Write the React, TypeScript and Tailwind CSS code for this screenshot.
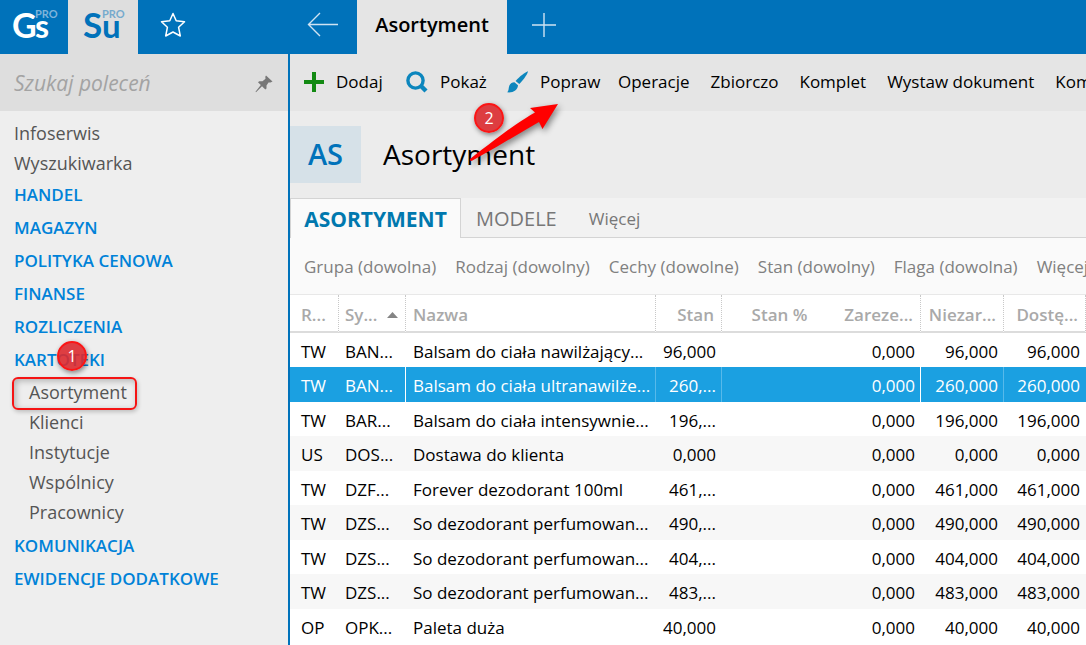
import type { ReactNode } from "react";
import clsx from "clsx";

const mainMenu = ["HANDEL", "MAGAZYN", "POLITYKA CENOWA", "FINANSE", "ROZLICZENIA"];
const lastMenu = ["KOMUNIKACJA", "EWIDENCJE DODATKOWE"];
const kartoteki = ["Asortyment", "Klienci", "Instytucje", "Wspólnicy", "Pracownicy"];
const textActions = ["Operacje", "Zbiorczo", "Komplet", "Wystaw dokument", "Komunikacja"];
const filters = [
    "Grupa (dowolna)",
    "Rodzaj (dowolny)",
    "Cechy (dowolne)",
    "Stan (dowolny)",
    "Flaga (dowolna)",
    "Więcej"
];

const rows = [
    ["TW", "BAN...", "Balsam do ciała nawilżający...", "96,000", "", "0,000", "96,000", "96,000"],
    ["TW", "BAN...", "Balsam do ciała ultranawilże...", "260,...", "", "0,000", "260,000", "260,000"],
    ["TW", "BAR...", "Balsam do ciała intensywnie...", "196,...", "", "0,000", "196,000", "196,000"],
    ["US", "DOS...", "Dostawa do klienta", "0,000", "", "0,000", "0,000", "0,000"],
    ["TW", "DZF...", "Forever dezodorant 100ml", "461,...", "", "0,000", "461,000", "461,000"],
    ["TW", "DZS...", "So dezodorant perfumowan...", "490,...", "", "0,000", "490,000", "490,000"],
    ["TW", "DZS...", "So dezodorant perfumowan...", "404,...", "", "0,000", "404,000", "404,000"],
    ["TW", "DZS...", "So dezodorant perfumowan...", "483,...", "", "0,000", "483,000", "483,000"],
    ["OP", "OPK...", "Paleta duża", "40,000", "", "0,000", "40,000", "40,000"]
];

const selectedRow = 1;

function Badge({ children, className }: { children: ReactNode; className: string }) {
    return (
        <span
            className={clsx(
                "absolute flex size-[30px] items-center justify-center rounded-full border-2 border-[#fb1515] bg-[#dc2a2f]/90 text-base leading-none font-normal text-white shadow-[1px_2px_5px_rgba(0,0,0,0.45)]",
                className
            )}
        >
            {children}
        </span>
    );
}

function GestorLogo() {
    return (
        <svg width="52" height="36" viewBox="0 0 52 36" className="font-['Lato',sans-serif]" aria-hidden="true">
            <text x="4" y="31" fontSize="34" fontWeight="700" fill="#ffffff">G</text>
            <text x="27" y="31" fontSize="32" fontWeight="700" fill="#ffffff">s</text>
            <text x="27" y="11" fontSize="11" fontWeight="700" fill="#7fb4da">PRO</text>
        </svg>
    );
}

function SubiektLogo() {
    return (
        <svg width="52" height="36" viewBox="0 0 52 36" className="font-['Lato',sans-serif]" aria-hidden="true">
            <text x="6" y="31" fontSize="35" fontWeight="700" fill="#0072ba">S</text>
            <text x="25" y="31" fontSize="33" fontWeight="700" fill="#0072ba">u</text>
            <text x="25" y="11" fontSize="11" fontWeight="700" fill="#76aacd">PRO</text>
        </svg>
    );
}

function TopBar() {
    return (
        <header className="flex h-[54px] shrink-0 bg-[#0072ba] text-white">
            <div className="flex w-[290px] shrink-0">
                <button aria-label="Gestor PRO" className="flex w-[68px] items-center justify-center pb-1">
                    <GestorLogo />
                </button>
                <button aria-label="Subiekt PRO" className="flex w-[70px] items-center justify-center bg-[#dedede] pb-1">
                    <SubiektLogo />
                </button>
                <button aria-label="Ulubione" className="flex w-[70px] items-center justify-center pb-1">
                    <svg width="26" height="26" viewBox="0 0 26 26" fill="none" stroke="currentColor" strokeWidth="1.5" strokeLinejoin="round">
                        <path d="M13 1.5 L16.2 8.8 L24.5 9.8 L18.6 15.3 L20.3 24 L13 20 L5.7 24 L7.4 15.3 L1.5 9.8 L9.8 8.8 Z" />
                    </svg>
                </button>
            </div>
            <button aria-label="Wstecz" className="flex w-[67px] shrink-0 items-center justify-center pr-[2px] pb-1">
                <svg width="32" height="26" viewBox="0 0 32 26" fill="none" stroke="#cfe3f2" strokeWidth="1.4">
                    <path d="M31 12.5 H1.5 M13 1 L1.5 12.5 L13 24" />
                </svg>
            </button>
            <button className="w-[150px] shrink-0 bg-[#e5e5e5] pb-1 text-xl font-semibold text-black">Asortyment</button>
            <button aria-label="Nowa karta" className="flex w-[74px] items-center justify-center pb-1">
                <svg width="24" height="24" viewBox="0 0 24 24" fill="none" stroke="#cfe3f2" strokeWidth="1.4">
                    <path d="M0 12 H24 M12 0 V24" />
                </svg>
            </button>
        </header>
    );
}

function MenuGroup({ children }: { children: ReactNode }) {
    return (
        <a href="#menu" className="relative block text-[17px] leading-[33px] font-semibold text-[#0082d8]">
            {children}
        </a>
    );
}

function Sidebar() {
    return (
        <aside className="w-[290px] shrink-0 border-r-2 border-[#0072ba] bg-[#eeeeee]">
            <div className="flex h-[57px] items-center bg-[#dedede] pt-[3px] pr-[15px] pl-[14px]">
                <input
                    type="text"
                    aria-label="Szukaj poleceń"
                    placeholder="Szukaj poleceń"
                    className="min-w-0 flex-1 bg-transparent text-[21px] italic outline-none placeholder:text-[#a3a3a3]"
                />
                <button aria-label="Przypnij">
                    <svg width="18" height="18" viewBox="0 0 18 18" fill="#777777">
                        <path d="M11 0.5 L17.5 6.5 L15.5 7.5 L13.5 7.5 L11.5 10.5 L11.5 13.5 L10.3 14.5 L7 11.3 L1 17.3 L0.5 16.8 L5.8 10 L3 7.3 L4.2 6.3 L7.5 6.3 L10.5 3.8 L10.3 1.8 Z" />
                    </svg>
                </button>
            </div>
            <nav className="pt-[7px] pl-[14px] text-[#555555]">
                <a href="#infoserwis" className="block text-lg leading-[30px]">Infoserwis</a>
                <a href="#wyszukiwarka" className="block text-lg leading-[30px]">Wyszukiwarka</a>
                {mainMenu.map((name) => (
                    <MenuGroup key={name}>{name}</MenuGroup>
                ))}
                <MenuGroup>
                    KARTOTEKI
                    <Badge className="-top-[2px] left-[43px]">1</Badge>
                </MenuGroup>
                <ul className="mt-px mb-[2px]">
                    {kartoteki.map((name, i) => (
                        <li key={name} className="relative pl-[15px]">
                            {i === 0 && (
                                <span className="absolute top-0 -left-[2px] h-[33px] w-[125px] rounded-md border-2 border-[#f51414] shadow-[inset_2px_2px_6px_rgba(0,0,0,0.25),1px_2px_4px_rgba(0,0,0,0.2)]" />
                            )}
                            <a href="#kartoteka" className="relative text-lg leading-[30px]">{name}</a>
                        </li>
                    ))}
                </ul>
                {lastMenu.map((name) => (
                    <MenuGroup key={name}>{name}</MenuGroup>
                ))}
            </nav>
        </aside>
    );
}

function Toolbar() {
    return (
        <div className="flex h-[57px] shrink-0 items-center overflow-hidden bg-[#e5e5e5] pb-[2px] pl-[14px] text-[17px] whitespace-nowrap text-black">
            <button className="flex w-[102px] shrink-0 items-center gap-3">
                <svg width="20" height="20" viewBox="0 0 20 20" fill="#138a13">
                    <path d="M8 0 H12 V8 H20 V12 H12 V20 H8 V12 H0 V8 H8 Z" />
                </svg>
                Dodaj
            </button>
            <button className="flex w-[101px] shrink-0 items-center gap-3">
                <svg width="22" height="22" viewBox="0 0 22 22" fill="none" stroke="#0c86bd">
                    <circle cx="9.5" cy="9.5" r="7.6" strokeWidth="3.4" />
                    <path d="M15 15 L20 20" strokeWidth="4.4" />
                </svg>
                Pokaż
            </button>
            <button className="flex w-[111px] shrink-0 items-center gap-3">
                <svg width="21" height="22" viewBox="0 0 21 22" fill="#0c86bd">
                    <path d="M21 0.3 C21 2 17.5 8 12.3 13 L8.6 10 C12.5 5.5 18.5 1 21 0.3 Z" />
                    <path d="M7.4 11.2 L11 14.3 C10.6 19.5 6 22 0 21.3 C2.2 19.8 1.2 17.5 2.5 14.3 C3.5 12.2 5.5 11.1 7.4 11.2 Z" />
                </svg>
                Popraw
            </button>
            <div className="flex gap-[21px]">
                {textActions.map((name) => (
                    <button key={name}>{name}</button>
                ))}
            </div>
        </div>
    );
}

function PageTitle() {
    return (
        <div className="relative flex h-[87px] shrink-0 items-center gap-[22px] bg-[#ececec]">
            <div className="flex h-[57px] w-[71px] items-center justify-center bg-[#d6e1e8] pb-[2px] text-[29px] font-semibold text-[#0072ba]">AS</div>
            <h1 className="pb-[2px] text-[28px] text-black">Asortyment</h1>
            <Badge className="-top-2 left-[184px]">2</Badge>
            <svg
                width="96"
                height="66"
                viewBox="0 0 96 66"
                className="absolute -top-[9px] left-[178px] drop-shadow-[2px_3px_3px_rgba(0,0,0,0.45)]"
                fill="#ff0000"
                aria-hidden="true"
            >
                <path d="M90 2 L62 6 L67 10.5 C48 21 24 40 2 57 C1.5 58.5 3 59.5 4.5 58.5 C29 45 52 31 71 20 L74.5 27 Z" />
            </svg>
        </div>
    );
}

function GridHead() {
    const cell = "overflow-hidden border-b-2 border-[#dcdcdc] pt-[3px]";
    const right = "pr-[7px] text-right";
    const split = "border-r border-r-[#c8c8c8] [border-right-style:dotted]";
    return (
        <thead>
            <tr className="h-[38px] text-[#a9a9a9] [&>th]:font-semibold">
                <th className={clsx(cell, split, "pl-[11px] text-left")}>R...</th>
                <th className={clsx(cell, split, "pr-[7px] pl-[6px]")}>
                    <span className="flex items-center justify-between">
                        Sy...
                        <svg width="11" height="6" viewBox="0 0 11 6" fill="#858585">
                            <path d="M0 6 L5.5 0 L11 6 Z" />
                        </svg>
                    </span>
                </th>
                <th className={clsx(cell, split, "pl-[7px] text-left")}>Nazwa</th>
                <th className={clsx(cell, split, right)}>Stan</th>
                <th className={clsx(cell, "text-center")}>Stan %</th>
                <th className={clsx(cell, split, right)}>Zareze...</th>
                <th className={clsx(cell, split, right)}>Niezar...</th>
                <th className={clsx(cell, split, right)}>Dostę...</th>
            </tr>
        </thead>
    );
}

function Grid() {
    return (
        <table className="w-full min-w-[796px] table-fixed border-separate border-spacing-0 text-[17px] leading-6 whitespace-nowrap">
            <colgroup>
                <col className="w-[49px]" />
                <col className="w-[67px]" />
                <col />
                <col className="w-[66px]" />
                <col className="w-[115px]" />
                <col className="w-[84px]" />
                <col className="w-[83px]" />
                <col className="w-[82px]" />
            </colgroup>
            <GridHead />
            <tbody>
                {rows.map((row, i) => (
                    <tr
                        key={i}
                        className={clsx(
                            "h-[34px] even:h-[35px]",
                            i === selectedRow ? "bg-[#1ba0e1] text-white" : "text-black even:bg-[#f7f7f7]"
                        )}
                    >
                        {row.map((value, col) => (
                            <td
                                key={col}
                                className={clsx(
                                    "overflow-hidden border-r pt-[3px]",
                                    col === 0 && "pl-[11px]",
                                    col === 1 && "pl-[6px]",
                                    col === 2 && "pl-[7px]",
                                    col > 2 && "pr-[5px] text-right",
                                    i === selectedRow && (col === 1 || col === 5) && "border-white",
                                    i === selectedRow && (col === 2 || col === 3 || col === 6) && "border-[#57b9ea]",
                                    (i !== selectedRow || col === 0 || col === 4 || col === 7) && "border-transparent"
                                )}
                            >
                                {value}
                            </td>
                        ))}
                    </tr>
                ))}
            </tbody>
        </table>
    );
}

export default function App() {
    return (
        <div className="flex h-screen flex-col overflow-hidden bg-white font-['Open_Sans','Noto_Sans',sans-serif]">
            <TopBar />
            <div className="flex min-h-0 flex-1">
                <Sidebar />
                <main className="flex min-w-0 flex-1 flex-col overflow-hidden">
                    <Toolbar />
                    <PageTitle />
                    <div className="flex h-10 shrink-0 bg-[#f2f2f2]">
                        <button className="w-[171px] border border-b-0 border-[#d4d4d4] bg-[#fafafa] pt-[2px] text-[21px] font-bold text-[#0078ae]">ASORTYMENT</button>
                        <div className="flex flex-1 items-center gap-8 border-b border-[#d4d4d4] pt-[2px] pl-[15px] text-[#777777]">
                            <button className="text-xl">MODELE</button>
                            <button className="text-[17px]">Więcej</button>
                        </div>
                    </div>
                    <div className="flex h-[57px] shrink-0 items-center gap-[19px] overflow-hidden border-b border-[#e8e8e8] bg-[#fafafa] pt-[2px] pl-[14px] text-[17px] whitespace-nowrap text-[#808080]">
                        {filters.map((name) => (
                            <button key={name}>{name}</button>
                        ))}
                    </div>
                    <Grid />
                </main>
            </div>
        </div>
    );
}
